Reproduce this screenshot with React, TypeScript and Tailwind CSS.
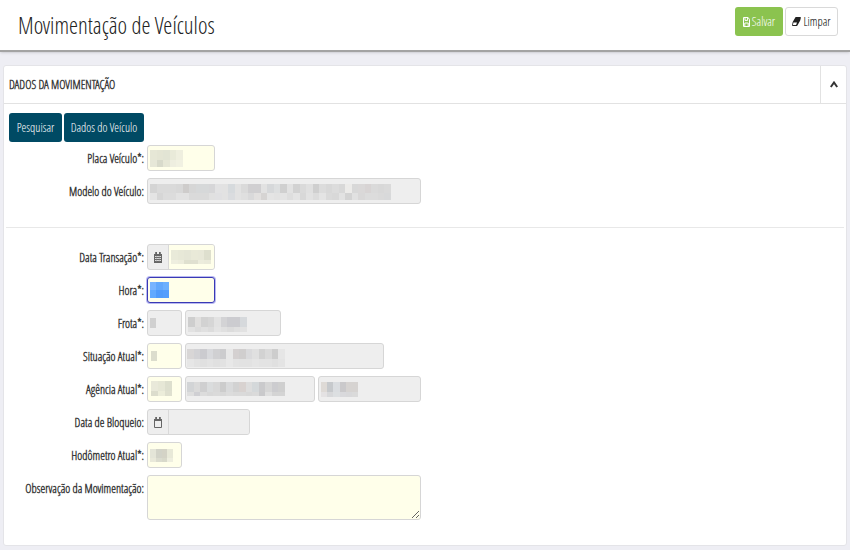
import React from "react";
import type { ReactNode } from "react";

type MosaicProps = {
  rows: string[][];
  cell: number;
  heights: number[];
  className: string;
};

/* Pixelated block that hides a confidential value. */
function Mosaic({ rows, cell, heights, className }: MosaicProps) {
  const columns = Math.max(...rows.map((row) => row.length));
  const total = heights.reduce((sum, height) => sum + height, 0);
  return (
    <svg
      aria-hidden="true"
      className={"pointer-events-none absolute " + className}
      viewBox={`0 0 ${columns * cell} ${total}`}
      preserveAspectRatio="none"
      shapeRendering="crispEdges"
    >
      {rows.map((row, r) =>
        row.map((color, c) => (
          <rect
            key={`${r}-${c}`}
            x={c * cell}
            y={heights.slice(0, r).reduce((sum, height) => sum + height, 0)}
            width={cell}
            height={heights[r]}
            fill={color === "-" ? "none" : "#" + color}
          />
        )),
      )}
    </svg>
  );
}

const split = (text: string) => text.split(" ");

const modelo = [
  split("d4d4d4 dadada dadada dadada d8d8d8 cecccb d6d6d6 d6d8d9 d6d8d9 d6d6d8 e2e2e3 e2e2e2 d6dadd e2e2e2 dadada d0cfd1 d0cfd1 e2e2e2 d6d8da dddfe0 d0d0d0 e2e2e2 d2d2d2 dadada e0e0e0 cfcfcf dcdcdc d8d8d8 dcdcdc d8d8d8 ecebe9 d8d8d8 dad8d8 d8d4d4 dadada d8d8d8 dadada"),
  split("e4e4e4 d6d6d6 dcdcdc dcdcdc e2e2e2 e2e2e2 dadada dadada dadada e0e0e0 e0e0e2 e2e2e2 dadcdf e2e2e2 dfdfdf d9d9da e2e0df d6d4d3 e4e4e4 e2e2e2 e4e4e4 dedede e4e4e4 d8d8d8 e2e2e2 dcdcdc e4e4e4 dadada d8d8d8 e2e2e2 d3d3d3 e1e1e1 d9d8d8 dcdcdc dcdcdc dadada d8d9da"),
];
const placa = [
  split("e6e7d6 e4e5d4 e2e4d4 e9ead9 efefdf"),
  split("e6e7d8 d8dacb e6e7d6 eeeee0 f1f1e2"),
];
const data = [
  split("e9ead9 e7e8d7 e5e6d6 e9e9d8 e8e8d8 dedfce"),
  split("eeeedf ececdc dfe0cf e0e0d0 ececdc eaeada"),
];
const hora = [split("78b4ff 62a8fc 6cb0fd"), split("62aaff 519cfb 559ffc")];
const frota = [
  split("cecece e0dfde d2d2d2 d6d6d6 e2e2e2 d3d3d5 ccccd0 ccccd0 d6d9dc"),
  split("e2e2e2 dcdcdc e0e0e0 dcdcdc e4e4e4 e0e0e0 dcdcdc e0e0e0 e2e2e2"),
];
const situacao = [
  split("d8d6d6 d2d2d5 cbcbcf d8d9dc d0d0d2 ccccce e8e8e8 d4d0d0 d0cece dadadc e0e0e0 d2d2d2 dadada cdcdcd e6e6e6"),
  split("e6e6e6 e2e2e2 e0e0e0 e3e3e3 e0e0e0 e2e2e2 e8e8e8 e3e3e3 e2e2e2 e2e2e2 e5e5e5 e3e3e3 e3e3e3 e0e0e0 e4e4e4"),
];
const agencia = [
  split("d2d4d6 dadada cfcfd0 dadcdd d8d8d8 cccccc d9dadb d2d2d2 d8d2d0 dddddd d4d8da cacacc d6d6d6 cccccf cfcfcf"),
  split("dedede cfcfd3 dcdcdc d8d8d8 dadada d8d8d8 dcdcdc dadada dadada d8d8d8 dadada c9c9cb dfdfdf d4d4d4 d4d4d4"),
];
const filial = [
  split("dedad6 c6c9cc dadde0 cac9cb d6d3d1 d6d3d1"),
  split("e4e2e3 d7d8da dcdfe1 d9d9dc d8d8da dadada"),
];

type FieldProps = {
  id: string;
  label: string;
  width: string;
  tone?: "edit" | "locked";
  focused?: boolean;
  children?: ReactNode;
};

function Field({ id, label, width, tone = "edit", focused, children }: FieldProps) {
  const fill = tone === "edit" ? "bg-[#ffffea]" : "bg-[#eeeeee]";
  const border = focused
    ? "border-[#3a3ab4] ring-1 ring-[#b9b9f2]"
    : "border-[#d6d6d6]";
  return (
    <div className={"relative min-w-0 " + width}>
      <input
        id={id}
        aria-label={label}
        readOnly={tone === "locked"}
        className={`block h-[26px] w-full rounded-[3px] border px-1 text-xs outline-none ${fill} ${border}`}
      />
      {children}
    </div>
  );
}

function DateField({ id, label, width, tone, icon, children }: FieldProps & { icon: ReactNode }) {
  const fill = tone === "edit" ? "bg-[#ffffea]" : "bg-[#eeeeee]";
  return (
    <div className={"flex h-[26px] overflow-hidden rounded-[3px] border border-[#d6d6d6] bg-[#eeeeee] " + width}>
      <span className="flex w-5 shrink-0 items-center justify-center">{icon}</span>
      <div className="relative min-w-0 flex-1 border-l border-[#d9d9d9]">
        <input id={id} aria-label={label} readOnly={tone === "locked"} className={"block h-full w-full outline-none " + fill} />
        {children}
      </div>
    </div>
  );
}

function Row({ id, label, children }: { id: string; label: string; children: ReactNode }) {
  return (
    <div className="flex gap-[3px]">
      <label
        htmlFor={id}
        className="h-[26px] w-[135px] shrink-0 text-right text-xs leading-[28px] font-bold whitespace-nowrap text-[#3c3c3c]"
      >
        {label}
      </label>
      <div className="flex min-w-0 flex-1 gap-[3px]">{children}</div>
    </div>
  );
}

function SaveIcon() {
  return (
    <svg aria-hidden="true" viewBox="0 0 7 10" className="h-[10px] w-[7px]" fill="none" stroke="currentColor">
      <path d="M.5.5h4.6l1.4 2v7h-6z" />
      <path d="M2 .8v2.6h2.6V.8M1.8 9V6h3.4v3" />
    </svg>
  );
}

function EraserIcon() {
  return (
    <svg aria-hidden="true" viewBox="0 0 9 9" className="h-[9px] w-[9px]">
      <path d="M3.6 0H8.4Q9 .2 8.8 1L8.2 3.6 5.4 8.4Q5 9 4.4 9H.7Q0 8.8.1 8L.7 5z" fill="#222" />
      <path d="M1.4 5.5H5L4.1 8H.9z" fill="#fff" />
    </svg>
  );
}

function CalendarGridIcon() {
  return (
    <svg aria-hidden="true" viewBox="0 0 8 11" className="h-[11px] w-2">
      <path d="M0 2h8v9H0zM1.2 0h1.8v3H1.2zM5 0h1.8v3H5z" fill="#666" />
      <path d="M1 4.5h6M1 6.5h6M1 8.5h6" stroke="#ddd" />
      <path d="M2.7 4v6M5.2 4v6" stroke="#888" strokeWidth=".5" />
    </svg>
  );
}

function CalendarIcon() {
  return (
    <svg aria-hidden="true" viewBox="0 0 8 11" className="h-[11px] w-2">
      <path d="M.5 2.5h7v8h-7z" fill="none" stroke="#666" />
      <path d="M0 2h8v2H0zM1.2 0h1.8v3H1.2zM5 0h1.8v3H5z" fill="#666" />
    </svg>
  );
}

const actionButton = "flex h-[29px] items-center justify-center rounded-[3px] text-xs whitespace-nowrap";

export default function App() {
  return (
    <div className="min-h-screen bg-[#eeeef4] pb-1 font-['Open_Sans_Condensed_Light','Open_Sans_Condensed','Open_Sans',sans-serif] text-[#333333]">
      <header className="flex h-[52px] items-start justify-between border-b-2 border-[#a3a3a3] bg-white pr-3 pl-[18px] shadow-sm">
        <h1 className="text-[23px] leading-[50px] font-normal whitespace-nowrap text-[#222222]">
          Movimentação de Veículos
        </h1>
        <div className="flex gap-[2px] pt-[7px]">
          <button type="button" className={actionButton + " w-12 gap-[2px] bg-[#8bc34f] text-white"}>
            <SaveIcon />
            Salvar
          </button>
          <button type="button" className={actionButton + " w-[53px] gap-[2px] border border-[#d9d9d9] bg-white text-black"}>
            <EraserIcon />
            Limpar
          </button>
        </div>
      </header>

      <main className="mx-[3px] mt-[13px] rounded-[3px] border border-[#e4e4e8] bg-white">
        <div className="flex h-[38px] border-b border-[#e2e2e2]">
          <h2 className="flex flex-1 items-center pl-[5px] text-xs font-bold text-[#3c3c3c]">DADOS DA MOVIMENTAÇÃO</h2>
          <button
            type="button"
            aria-label="Recolher painel"
            className="flex w-[26px] items-center justify-center border-l border-[#e2e2e2]"
          >
            <svg aria-hidden="true" viewBox="0 0 8 7" className="h-[7px] w-2">
              <path d="M.8 6 4 1.5 7.2 6" fill="none" stroke="#333" strokeWidth="2" />
            </svg>
          </button>
        </div>

        <form className="pt-[9px] pb-[25px]">
          <div className="flex gap-[2px] px-[5px]">
            <button type="button" className={actionButton + " w-[53px] bg-[#004a64] text-white"}>
              Pesquisar
            </button>
            <button type="button" className={actionButton + " w-20 bg-[#004a64] text-white"}>
              Dados do Veículo
            </button>
          </div>

          <div className="mt-[3px] flex flex-col gap-[7px] px-[5px]">
            <Row id="placa" label="Placa Veículo*:">
              <Field id="placa" label="Placa Veículo" width="w-[68px]">
                <Mosaic rows={placa} cell={6} heights={[10, 7]} className="top-[5px] left-[3px] h-[17px] w-[33px]" />
              </Field>
            </Row>
            <Row id="modelo" label="Modelo do Veículo:">
              <Field id="modelo" label="Modelo do Veículo" width="w-[274px]" tone="locked">
                <Mosaic rows={modelo} cell={6} heights={[9, 7]} className="top-[6px] left-[3px] h-4 w-[241px]" />
              </Field>
            </Row>
          </div>

          <hr className="mx-[2px] mt-[23px] mb-4 border-[#e8e8e8]" />

          <div className="flex flex-col gap-[7px] px-[5px]">
            <Row id="data" label="Data Transação*:">
              <DateField id="data" label="Data Transação" width="w-[68px]" tone="edit" icon={<CalendarGridIcon />}>
                <Mosaic rows={data} cell={6} heights={[10, 4]} className="top-[5px] left-[2px] h-[14px] w-10" />
              </DateField>
            </Row>
            <Row id="hora" label="Hora*:">
              <Field id="hora" label="Hora" width="w-[68px]" focused>
                <Mosaic rows={hora} cell={6} heights={[8, 8]} className="top-[5px] left-[3px] h-4 w-[19px]" />
              </Field>
            </Row>
            <Row id="frota" label="Frota*:">
              <Field id="frota" label="Frota" width="w-[35px]" tone="locked">
                <Mosaic rows={[["d0d0d0"]]} cell={6} heights={[10]} className="top-2 left-[3px] h-[10px] w-[6px]" />
              </Field>
              <Field id="frota-nome" label="Nome da frota" width="w-[96px]" tone="locked">
                <Mosaic rows={frota} cell={6} heights={[10, 5]} className="top-[7px] left-[3px] h-[15px] w-[59px]" />
              </Field>
            </Row>
            <Row id="situacao" label="Situação Atual*:">
              <Field id="situacao" label="Situação Atual" width="w-[35px]">
                <Mosaic rows={[["dcddcd"]]} cell={6} heights={[10]} className="top-2 left-1 h-[10px] w-[6px]" />
              </Field>
              <Field id="situacao-nome" label="Descrição da situação" width="w-[199px]" tone="locked">
                <Mosaic rows={situacao} cell={6} heights={[10, 8]} className="top-[6px] left-[2px] h-[18px] w-[98px]" />
              </Field>
            </Row>
            <Row id="agencia" label="Agência Atual*:">
              <Field id="agencia" label="Agência Atual" width="w-[35px]">
                <Mosaic
                  rows={[split("e9e9da e6e7d6 dddfce"), split("dcddcd ecedda dfe0cf")]}
                  cell={6}
                  heights={[10, 5]}
                  className="top-[5px] left-1 h-[15px] w-[21px]"
                />
              </Field>
              <Field id="agencia-nome" label="Nome da agência" width="w-[130px]" tone="locked">
                <Mosaic rows={agencia} cell={6} heights={[10, 4]} className="top-[6px] left-[2px] h-[14px] w-[98px]" />
              </Field>
              <Field id="filial" label="Filial" width="w-[103px]" tone="locked">
                <Mosaic rows={filial} cell={6} heights={[10, 5]} className="top-[6px] left-[3px] h-[15px] w-[37px]" />
              </Field>
            </Row>
            <Row id="bloqueio" label="Data de Bloqueio:">
              <DateField id="bloqueio" label="Data de Bloqueio" width="w-[103px]" tone="locked" icon={<CalendarIcon />} />
            </Row>
            <Row id="hodometro" label="Hodômetro Atual*:">
              <Field id="hodometro" label="Hodômetro Atual" width="w-[35px]">
                <Mosaic
                  rows={[split("e4e5d8 d2d3c8 d4d3c6 e8e9d8"), split("e9e9da dbdccf d8d9ca eeeedf")]}
                  cell={6}
                  heights={[9, 4]}
                  className="top-[7px] left-[3px] h-[13px] w-[23px]"
                />
              </Field>
            </Row>
            <Row id="observacao" label="Observação da Movimentação:">
              <textarea
                id="observacao"
                className="block h-[45px] w-[274px] resize rounded-[3px] border border-[#d6d6d6] bg-[#ffffea] px-1 text-xs outline-none"
              />
            </Row>
          </div>
        </form>
      </main>
    </div>
  );
}
